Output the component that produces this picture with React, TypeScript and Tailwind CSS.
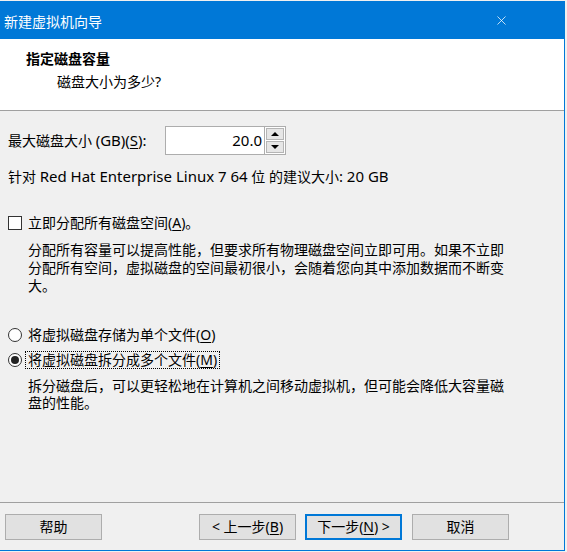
import { X } from 'lucide-react';

const font = "font-['Noto_Sans','Noto_Sans_CJK_SC',sans-serif]";

function Button({ label, mnemonic, before, after, primary }: { label: string; mnemonic?: string; before?: string; after?: string; primary?: boolean }) {
  return (
    <button
      className={`w-[97px] h-[26px] bg-[#e1e1e1] text-[14px] leading-none text-black flex items-center justify-center ${
        primary ? 'border-2 border-[#0078d7]' : 'border border-[#adadad]'
      }`}
    >
      <span>
        {before}
        {label}
        {mnemonic && (
          <>
            (<span className="underline underline-offset-2">{mnemonic}</span>)
          </>
        )}
        {after}
      </span>
    </button>
  );
}

function Radio({ checked }: { checked?: boolean }) {
  return (
    <span className="w-[14px] h-[14px] rounded-full border border-[#333333] bg-white flex items-center justify-center shrink-0">
      {checked && <span className="w-[8px] h-[8px] rounded-full bg-[#222222]" />}
    </span>
  );
}

export default function App() {
  return (
    <div className={`w-[567px] h-[552px] bg-[#f0f0f0] pt-px ${font}`}>
      <div className="w-[565px] h-[550px] border-r border-b border-[#0078d7] bg-[#f0f0f0] flex flex-col">
        {/* Title bar */}
        <div className="h-[38px] bg-[#0078d7] flex items-center justify-between pl-[4px] pr-[55px] text-white">
          <span className="text-[14px] leading-none pt-[3px]">新建虚拟机向导</span>
          <X size={15} strokeWidth={1.2} className="text-white" />
        </div>

        {/* Header */}
        <div className="h-[72px] bg-white border-b border-[#a0a0a0] pl-[26px] pt-[10px]">
          <div className="text-[14px] font-bold leading-[20px] text-black">指定磁盘容量</div>
          <div className="text-[14px] leading-[20px] text-black pl-[31px] pt-[3px]">磁盘大小为多少?</div>
        </div>

        {/* Body */}
        <div className="flex-1 pl-[8px] pr-[10px] text-[14px] text-black">
          <div className="flex items-center mt-[15px] h-[29px]">
            <span className="leading-none w-[157px]">
              最大磁盘大小 <span className="text-[15px]">(GB)(<span className="underline underline-offset-2">S</span>):</span>
            </span>
            <div className="h-[29px] w-[100px] bg-white border border-[#adadad] flex items-center justify-end pr-[2px] text-[15px]">
              20.0
            </div>
            <div className="h-[29px] w-[21px] flex flex-col border border-l-0 border-[#adadad] bg-white p-px gap-px">
              <div className="flex-1 bg-[#e6e6e6] border border-[#b5b5b5] flex items-center justify-center">
                <span className="w-0 h-0 border-l-[4px] border-r-[4px] border-b-[4px] border-l-transparent border-r-transparent border-b-black" />
              </div>
              <div className="flex-1 bg-[#e6e6e6] border border-[#b5b5b5] flex items-center justify-center">
                <span className="w-0 h-0 border-l-[4px] border-r-[4px] border-t-[4px] border-l-transparent border-r-transparent border-t-black" />
              </div>
            </div>
          </div>

          <div className="mt-[12px] leading-[18px]">
            针对 <span className="text-[15px]">Red Hat Enterprise Linux 7 64</span> 位 的建议大小<span className="text-[15px]">: 20 GB</span>
          </div>

          <div className="flex items-center mt-[28px] h-[18px]">
            <span className="w-[14px] h-[14px] border border-[#333333] bg-white shrink-0" />
            <span className="ml-[6px] leading-[18px]">
              立即分配所有磁盘空间(<span className="underline underline-offset-2">A</span>)。
            </span>
          </div>
          <p className="pl-[20px] w-[502px] mt-[9px] leading-[18px]">
            分配所有容量可以提高性能，但要求所有物理磁盘空间立即可用。如果不立即分配所有空间，虚拟磁盘的空间最初很小，会随着您向其中添加数据而不断变大。
          </p>

          <div className="flex items-center mt-[31px] h-[18px]">
            <Radio />
            <span className="ml-[6px] leading-[18px]">
              将虚拟磁盘存储为单个文件(<span className="underline underline-offset-2">O</span>)
            </span>
          </div>
          <div className="flex items-center mt-[7px] h-[18px]">
            <Radio checked />
            <span className="ml-[3px] px-[2px] leading-[16px] border border-dotted border-black">
              将虚拟磁盘拆分成多个文件(<span className="underline underline-offset-2">M</span>)
            </span>
          </div>
          <p className="pl-[20px] w-[502px] mt-[8px] leading-[17px]">
            拆分磁盘后，可以更轻松地在计算机之间移动虚拟机，但可能会降低大容量磁盘的性能。
          </p>
        </div>

        {/* Footer */}
        <div className="border-t border-[#a0a0a0] h-[48px] flex items-start pt-[11px] pl-[5px]">
          <Button label="帮助" />
          <div className="ml-[97px]">
            <Button label="上一步" mnemonic="B" before="< " />
          </div>
          <div className="ml-[9px]">
            <Button label="下一步" mnemonic="N" after=" >" primary />
          </div>
          <div className="ml-[10px]">
            <Button label="取消" />
          </div>
        </div>
      </div>
    </div>
  );
}
